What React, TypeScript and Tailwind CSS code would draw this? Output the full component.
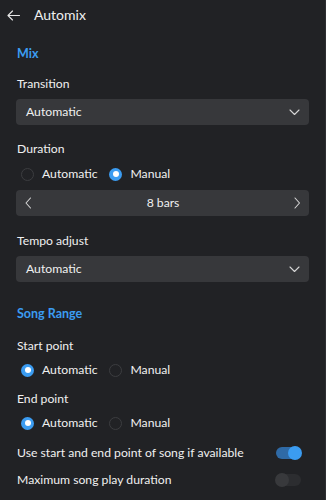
import React from "react"

// ── Small pieces ──────────────────────────────────────────────

function Chevron({ dir }: { dir: "down" | "left" | "right" }) {
  const d =
    dir === "down" ? "M1 1 L5.5 5.5 L10 1" :
    dir === "left" ? "M5.5 1 L1 6 L5.5 11" :
    "M1 1 L5.5 6 L1 11"
  const w = dir === "down" ? 11 : 7
  const h = dir === "down" ? 7 : 12
  return (
    <svg width={w} height={h} viewBox={`0 0 ${w} ${h}`} fill="none">
      <path d={d} stroke="#d6d6d6" strokeWidth="1.1" strokeLinecap="round" strokeLinejoin="round" />
    </svg>
  )
}

function Radio({ label, on }: { label: string; on?: boolean }) {
  return (
    <div className="flex items-center gap-[8px]">
      {on ? (
        <span className="flex h-[13px] w-[13px] items-center justify-center rounded-full bg-[#3b9cf1]">
          <span className="h-[6px] w-[6px] rounded-full bg-white" />
        </span>
      ) : (
        <span className="h-[13px] w-[13px] rounded-full border border-[#3c3d40]" />
      )}
      <span>{label}</span>
    </div>
  )
}

function RadioRow({ first }: { first: "auto" | "manual" }) {
  return (
    <div className="flex h-[18px] items-center gap-[12px] pl-[5px]">
      <Radio label="Automatic" on={first === "auto"} />
      <Radio label="Manual" on={first === "manual"} />
    </div>
  )
}

function Select({ value }: { value: string }) {
  return (
    <div className="flex h-[26px] items-center justify-between rounded-[4px] bg-[#37383b] pl-[10px] pr-[9px]">
      <span>{value}</span>
      <Chevron dir="down" />
    </div>
  )
}

function Toggle({ on }: { on?: boolean }) {
  return on ? (
    <div className="flex h-[12px] w-[25px] items-center justify-end rounded-full bg-[#2f6aa6]">
      <span className="-mr-[1px] h-[14px] w-[14px] rounded-full bg-[#3b9cf1]" />
    </div>
  ) : (
    <div className="flex h-[12px] w-[25px] items-center rounded-full bg-[#2c2d30]">
      <span className="-ml-[1px] h-[14px] w-[14px] rounded-full bg-[#38393c]" />
    </div>
  )
}

// ── Page ──────────────────────────────────────────────────────

export default function App() {
  return (
    <div
      className="flex h-[500px] w-[326px] flex-col overflow-hidden border-r border-[#2d2e31] bg-[#212225] text-[12.2px] leading-[18px] text-[#f0f0f0]"
      style={{ fontFamily: 'Lato, "Noto Sans", sans-serif' }}
    >
      {/* Header */}
      <header className="flex h-[30px] shrink-0 items-center gap-[14px] pl-[7px]">
        <svg width="13" height="11" viewBox="0 0 13 11" fill="none">
          <path d="M12.5 5.5 H1 M5.5 1 L1 5.5 L5.5 10" stroke="#e6e6e6" strokeWidth="1.1" strokeLinecap="round" strokeLinejoin="round" />
        </svg>
        <span className="text-[14px]">Automix</span>
      </header>

      <main className="flex flex-col px-[16px]">
        <div className="mt-[15px] h-[18px] pl-[1px] text-[12.5px] font-bold text-[#3b9cf1]">Mix</div>

        <div className="mt-[12px] h-[18px] pl-[1px]">Transition</div>
        <div className="mt-[6px]"><Select value="Automatic" /></div>

        <div className="mt-[15px] h-[18px] pl-[1px]">Duration</div>
        <div className="mt-[7px]"><RadioRow first="manual" /></div>
        <div className="mt-[7px] flex h-[26px] items-center justify-between rounded-[4px] bg-[#37383b] pl-[9px] pr-[8px]">
          <Chevron dir="left" />
          <span>8 bars</span>
          <Chevron dir="right" />
        </div>

        <div className="mt-[16px] h-[18px] pl-[1px]">Tempo adjust</div>
        <div className="mt-[6px]"><Select value="Automatic" /></div>

        <div className="mt-[23px] h-[18px] pl-[1px] text-[12.5px] font-bold text-[#3b9cf1]">Song Range</div>

        <div className="mt-[14px] h-[18px] pl-[1px]">Start point</div>
        <div className="mt-[6px]"><RadioRow first="auto" /></div>

        <div className="mt-[11px] h-[18px] pl-[1px]">End point</div>
        <div className="mt-[6px]"><RadioRow first="auto" /></div>

        <div className="mt-[12px] flex h-[18px] items-center justify-between pl-[1px] pr-[8px]">
          <span>Use start and end point of song if available</span>
          <Toggle on />
        </div>
        <div className="mt-[9px] flex h-[18px] items-center justify-between pl-[1px] pr-[8px]">
          <span>Maximum song play duration</span>
          <Toggle />
        </div>
      </main>
    </div>
  )
}
